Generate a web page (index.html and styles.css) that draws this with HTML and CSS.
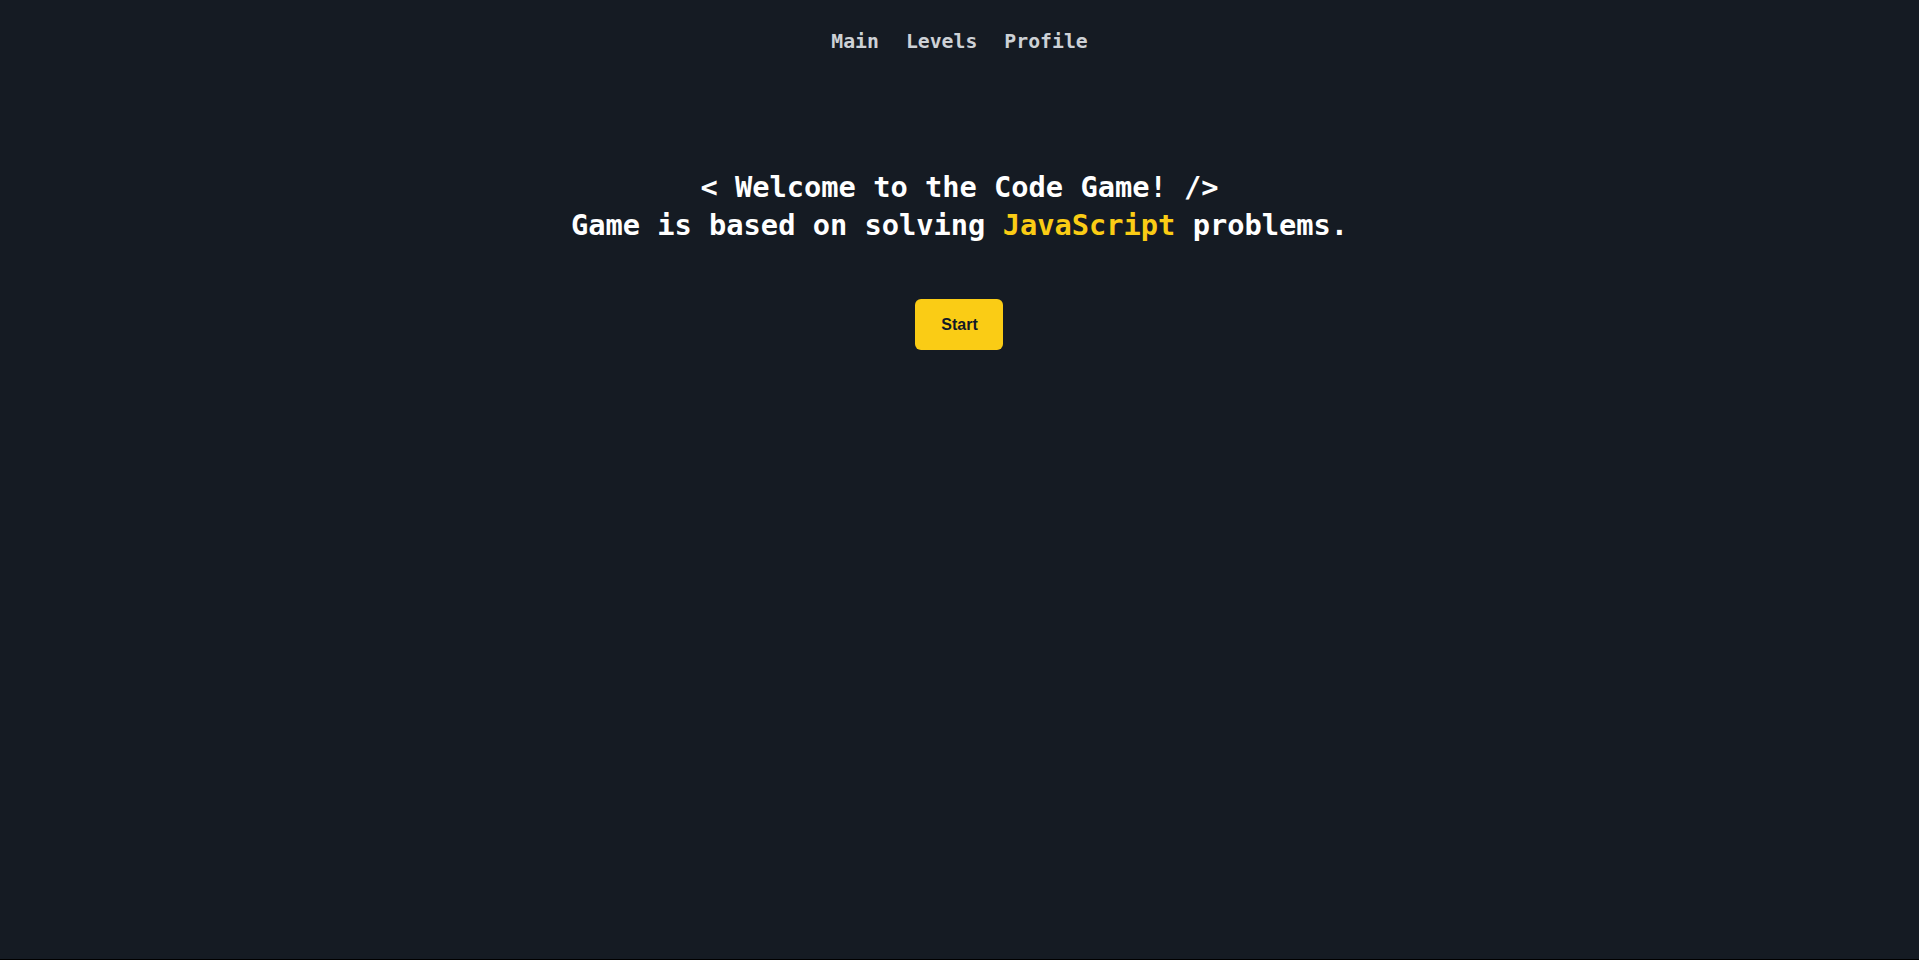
FILE: index.html
```html
<!DOCTYPE html>
<html lang="en">
<head>
<meta charset="utf-8">
<title>Code Game</title>
<link rel="stylesheet" href="styles.css">
</head>
<body>
<div class="page">
  <nav class="nav">
    <a class="nav-link" href="#">Main</a>
    <a class="nav-link" href="#">Levels</a>
    <a class="nav-link" href="#">Profile</a>
  </nav>
  <main class="hero">
    <h1 class="title">&lt; Welcome to the Code Game! /&gt;<br>Game is based on solving <span class="accent">JavaScript</span> problems.</h1>
    <button class="start-btn" type="button">Start</button>
  </main>
</div>
</body>
</html>
```
FILE: styles.css
```css
html {
  background: #000;
}
body {
  margin: 0;
  background: #151b23;
  height: 959px;
  font-family: "DejaVu Sans Mono", "Liberation Mono", monospace;
}
.page {
  display: flex;
  flex-direction: column;
  align-items: center;
}
.nav {
  display: flex;
  gap: 27px;
  padding-top: 29px;
}
.nav-link {
  color: #cdd1d6;
  font-weight: bold;
  font-size: 19.8px;
  line-height: 26px;
  text-decoration: none;
}
.hero {
  display: flex;
  flex-direction: column;
  align-items: center;
  padding-top: 113px;
}
.title {
  margin: 0;
  color: #fff;
  font-size: 28.7px;
  line-height: 38px;
  font-weight: bold;
  text-align: center;
}
.accent {
  color: #facc15;
}
.start-btn {
  margin-top: 55px;
  width: 88px;
  height: 51px;
  border: none;
  border-radius: 6px;
  background: #facc15;
  color: #111827;
  font-family: "Liberation Sans", Arial, sans-serif;
  font-weight: bold;
  font-size: 16px;
  cursor: pointer;
}
```
